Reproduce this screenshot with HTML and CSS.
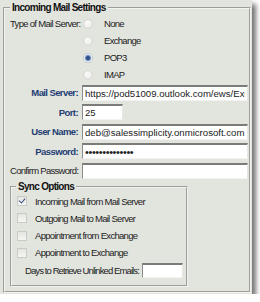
FILE: index.html
```html
<!DOCTYPE html>
<html lang="en">
<head>
  <meta charset="UTF-8" />
  <title>Incoming Mail Settings</title>
  <link rel="stylesheet" href="styles.css">
</head>
<body>

  <div class="panel">
    <fieldset class="group outer">
      <legend>Incoming Mail Settings</legend>

      <div class="form">
        <span class="label plain type-label">Type of Mail Server:</span>
        <div class="radios">
          <label class="choice"><input type="radio" name="server"> None</label>
          <label class="choice"><input type="radio" name="server"> Exchange</label>
          <label class="choice"><input type="radio" name="server" checked> POP3</label>
          <label class="choice"><input type="radio" name="server"> IMAP</label>
        </div>

        <label class="label">Mail Server:</label>
        <input class="text" type="text" value="https://pod51009.outlook.com/ews/Exchange.asmx">

        <label class="label">Port:</label>
        <input class="text port" type="text" value="25">

        <label class="label">User Name:</label>
        <input class="text" type="text" value="deb@salessimplicity.onmicrosoft.com">

        <label class="label">Password:</label>
        <input class="text" type="password" value="salessimplic1x">

        <label class="label plain">Confirm Password:</label>
        <input class="text" type="password" value="">
      </div>

      <fieldset class="group sync">
        <legend>Sync Options</legend>
        <label class="check"><input type="checkbox" checked> Incoming Mail from Mail Server</label>
        <label class="check"><input type="checkbox"> Outgoing Mail to Mail Server</label>
        <label class="check"><input type="checkbox"> Appointment from Exchange</label>
        <label class="check"><input type="checkbox"> Appointment to Exchange</label>
        <div class="days">
          <span>Days to Retrieve Unlinked Emails:</span>
          <input class="text days-input" type="text" value="">
        </div>
      </fieldset>
    </fieldset>
  </div>

</body>
</html>
```

FILE: styles.css
```css
body {
  margin: 0;
  background: #fff;
  font-family: "Liberation Sans", Arial, sans-serif;
  font-size: 9.5px;
  letter-spacing: -0.7px;
  color: #222;
}

.panel {
  width: 252px;
  height: 294px;
  box-sizing: border-box;
  padding: 1px 1px 0 3px;
  background: #e2e4de;
  box-shadow: 4px 4px 5px rgba(0, 0, 0, 0.55);
}

.group {
  margin: 0;
  border: 2px groove #f2f3ef;
}

.group legend {
  font-size: 10px;
  letter-spacing: -0.7px;
  font-weight: bold;
  color: #111;
  padding: 0 2px;
}

.outer {
  padding: 0 1px 3px 5px;
  height: 292px;
  box-sizing: border-box;
}

.outer > legend {
  line-height: 14px;
}

.form {
  display: grid;
  grid-template-columns: 68px 1fr;
  grid-template-rows: 68px repeat(5, 19.5px);
  column-gap: 4px;
  align-items: center;
}

.label {
  text-align: right;
  white-space: nowrap;
  font-weight: bold;
  letter-spacing: -0.6px;
  color: #1f3d72;
}

.label.plain {
  font-weight: normal;
  letter-spacing: -0.7px;
  color: #222;
}

.type-label {
  align-self: start;
  line-height: 17px;
}

.radios {
  align-self: start;
  display: flex;
  flex-direction: column;
}

.choice {
  height: 17px;
  display: flex;
  align-items: center;
  gap: 11px;
}

.choice input {
  appearance: none;
  width: 10px;
  height: 10px;
  margin: 0 0 0 1px;
  border-radius: 50%;
  border: 1px solid #d6d7d2;
  background: radial-gradient(circle at 40% 35%, #fbfbf9, #e6e7e3);
  box-sizing: border-box;
}

.choice input:checked {
  border-color: #c5cbd3;
  background: radial-gradient(circle, #2e4f86 0, #2e4f86 1.5px, #6e8fc0 2.5px, #e6e9ee 3.5px);
}

.text {
  height: 16px;
  box-sizing: border-box;
  margin: 0;
  padding: 0 2px;
  border: 1px solid;
  border-top-width: 2px;
  border-color: #7b7c79 #e7e8e4 #f2f3f0 #8c8d8a;
  background: #fff;
  font-family: "Liberation Sans", Arial, sans-serif;
  font-size: 9.6px;
  letter-spacing: 0;
  color: #222;
  width: 100%;
  min-width: 0;
}

.text[type="password"] {
  font-size: 11px;
  letter-spacing: -0.4px;
}

.port {
  width: 41px;
}

.sync {
  width: 178px;
  box-sizing: border-box;
  padding: 0 0 6px 4px;
}

.sync > legend {
  line-height: 12px;
}

.check {
  height: 17.25px;
  display: flex;
  align-items: center;
  gap: 8px;
  white-space: nowrap;
}

.check input {
  appearance: none;
  position: relative;
  width: 10px;
  height: 10px;
  margin: 0 0 0 1px;
  border: 1px solid #c9cac5;
  background: linear-gradient(#e4e5e1, #f6f6f4);
  box-sizing: border-box;
}

.check input:checked::after {
  content: "";
  position: absolute;
  left: 2px;
  top: 0;
  width: 3px;
  height: 5px;
  border: solid #3b4f86;
  border-width: 0 1.5px 1.5px 0;
  transform: rotate(40deg);
}

.days {
  height: 17.25px;
  display: flex;
  align-items: center;
  gap: 3px;
  padding-left: 9px;
  white-space: nowrap;
  letter-spacing: -0.9px;
}

.days-input {
  flex: none;
  width: 41px;
  height: 15px;
}
```
